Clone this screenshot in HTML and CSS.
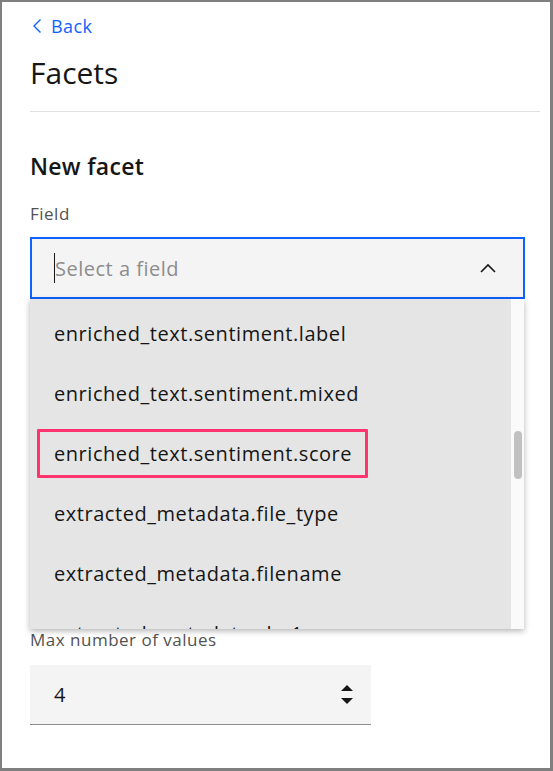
FILE: index.html
```html
<!DOCTYPE html>
<html>
<head>
<meta charset="utf-8">
<link rel="stylesheet" href="styles.css">
</head>
<body>
<div class="frame">
  <a class="back" href="#">
    <svg class="back-icon" width="10" height="16" viewBox="0 0 10 16"><path d="M8.5 1.5 L2 8 L8.5 14.5" fill="none" stroke="#0f62fe" stroke-width="1.4"/></svg>
    <span>Back</span>
  </a>
  <h1 class="title">Facets</h1>
  <hr class="divider">
  <h2 class="subtitle">New facet</h2>
  <div class="field">
    <label class="label">Field</label>
    <div class="combo">
      <div class="combo-input">
        <span class="caret"></span>
        <span class="placeholder">Select a field</span>
        <svg class="chev" width="16" height="10" viewBox="0 0 16 10"><path d="M1 9 L8 2 L15 9" fill="none" stroke="#161616" stroke-width="1.6"/></svg>
      </div>
      <div class="menu">
        <ul class="menu-list">
          <li class="item">enriched_text.sentiment.label</li>
          <li class="item">enriched_text.sentiment.mixed</li>
          <li class="item"><span class="mark">enriched_text.sentiment.score</span></li>
          <li class="item">extracted_metadata.file_type</li>
          <li class="item">extracted_metadata.filename</li>
          <li class="item">extracted_metadata.sha1</li>
        </ul>
        <div class="gutter"><div class="thumb"></div></div>
      </div>
    </div>
  </div>
  <div class="field field-max">
    <label class="label">Max number of values</label>
    <div class="number">
      <span class="num-value">4</span>
      <div class="stepper">
        <svg width="12" height="7" viewBox="0 0 12 7"><path d="M6 0 L12 6 L0 6 Z" fill="#161616"/></svg>
        <svg width="12" height="7" viewBox="0 0 12 7"><path d="M0 0 L12 0 L6 6 Z" fill="#161616"/></svg>
      </div>
    </div>
  </div>
</div>
</body>
</html>
```

FILE: styles.css
```css
* { box-sizing: border-box; }
html, body { margin: 0; padding: 0; background: #fff; }
body { font-family: "Open Sans", "Noto Sans", sans-serif; color: #161616; }

.frame {
  width: 553px;
  height: 771px;
  border: 2px solid #7f7f7f;
  border-right-width: 3px;
  border-bottom-width: 3px;
  padding: 12px 10px 0 28px;
  overflow: hidden;
}

.back {
  display: flex;
  align-items: center;
  gap: 9px;
  height: 24px;
  color: #0f62fe;
  text-decoration: none;
  font-size: 18px;
  letter-spacing: 0.4px;
  padding-left: 2px;
}
.back-icon { display: block; }

.title {
  margin: 15px 0 0 0;
  height: 40px;
  line-height: 40px;
  font-size: 30px;
  font-weight: 400;
  letter-spacing: 0;
}

.divider {
  margin: 18px 0 0 0;
  border: 0;
  height: 1px;
  background: #e0e0e0;
}

.subtitle {
  margin: 40px 0 0 0;
  height: 28px;
  line-height: 28px;
  font-size: 23px;
  font-weight: 600;
  letter-spacing: 0.3px;
}

.field { display: flex; flex-direction: column; }

.label {
  margin-top: 24px;
  height: 20px;
  line-height: 20px;
  font-size: 17px;
  letter-spacing: 0.5px;
  color: #525252;
}

.combo {
  position: relative;
  margin-top: 13px;
  width: 495px;
}

.combo-input {
  height: 62px;
  border: 2px solid #0f62fe;
  background: #f4f4f4;
  display: flex;
  align-items: center;
  padding: 0 27px 0 22px;
}
.caret {
  width: 1px;
  height: 30px;
  background: #161616;
}
.placeholder {
  flex: 1;
  font-size: 20px;
  letter-spacing: 0.5px;
  color: #8d8d8d;
}
.chev { display: block; }

.menu {
  position: absolute;
  top: 100%;
  left: 0;
  width: 494px;
  height: 330px;
  display: flex;
  background: #e5e5e5;
  box-shadow: 0 2px 6px rgba(0,0,0,0.3);
  overflow: hidden;
}
.menu-list {
  list-style: none;
  margin: 0;
  padding: 4px 0 0 0;
  flex: 1;
}
.item {
  height: 60px;
  display: flex;
  align-items: center;
  padding-left: 24px;
  font-size: 20px;
  letter-spacing: 0.55px;
  color: #161616;
}
.mark {
  margin-left: -17px;
  padding: 0 13px 0 14px;
  height: 49px;
  display: flex;
  align-items: center;
  border: 3px solid #ff3370;
  border-radius: 1px;
}
.gutter {
  width: 13px;
  background: #fafafa;
  padding: 132px 2px 0 3px;
}
.thumb {
  height: 48px;
  border-radius: 4px;
  background: #c1c1c1;
}

.field-max .label { margin-top: 331px; }

.number {
  margin-top: 15px;
  width: 341px;
  height: 60px;
  background: #f4f4f4;
  border-bottom: 1px solid #8d8d8d;
  display: flex;
  align-items: center;
  padding: 0 18px 0 24px;
}
.num-value { flex: 1; font-size: 20px; }
.stepper { display: flex; flex-direction: column; gap: 6px; }
.stepper svg { display: block; }
```
